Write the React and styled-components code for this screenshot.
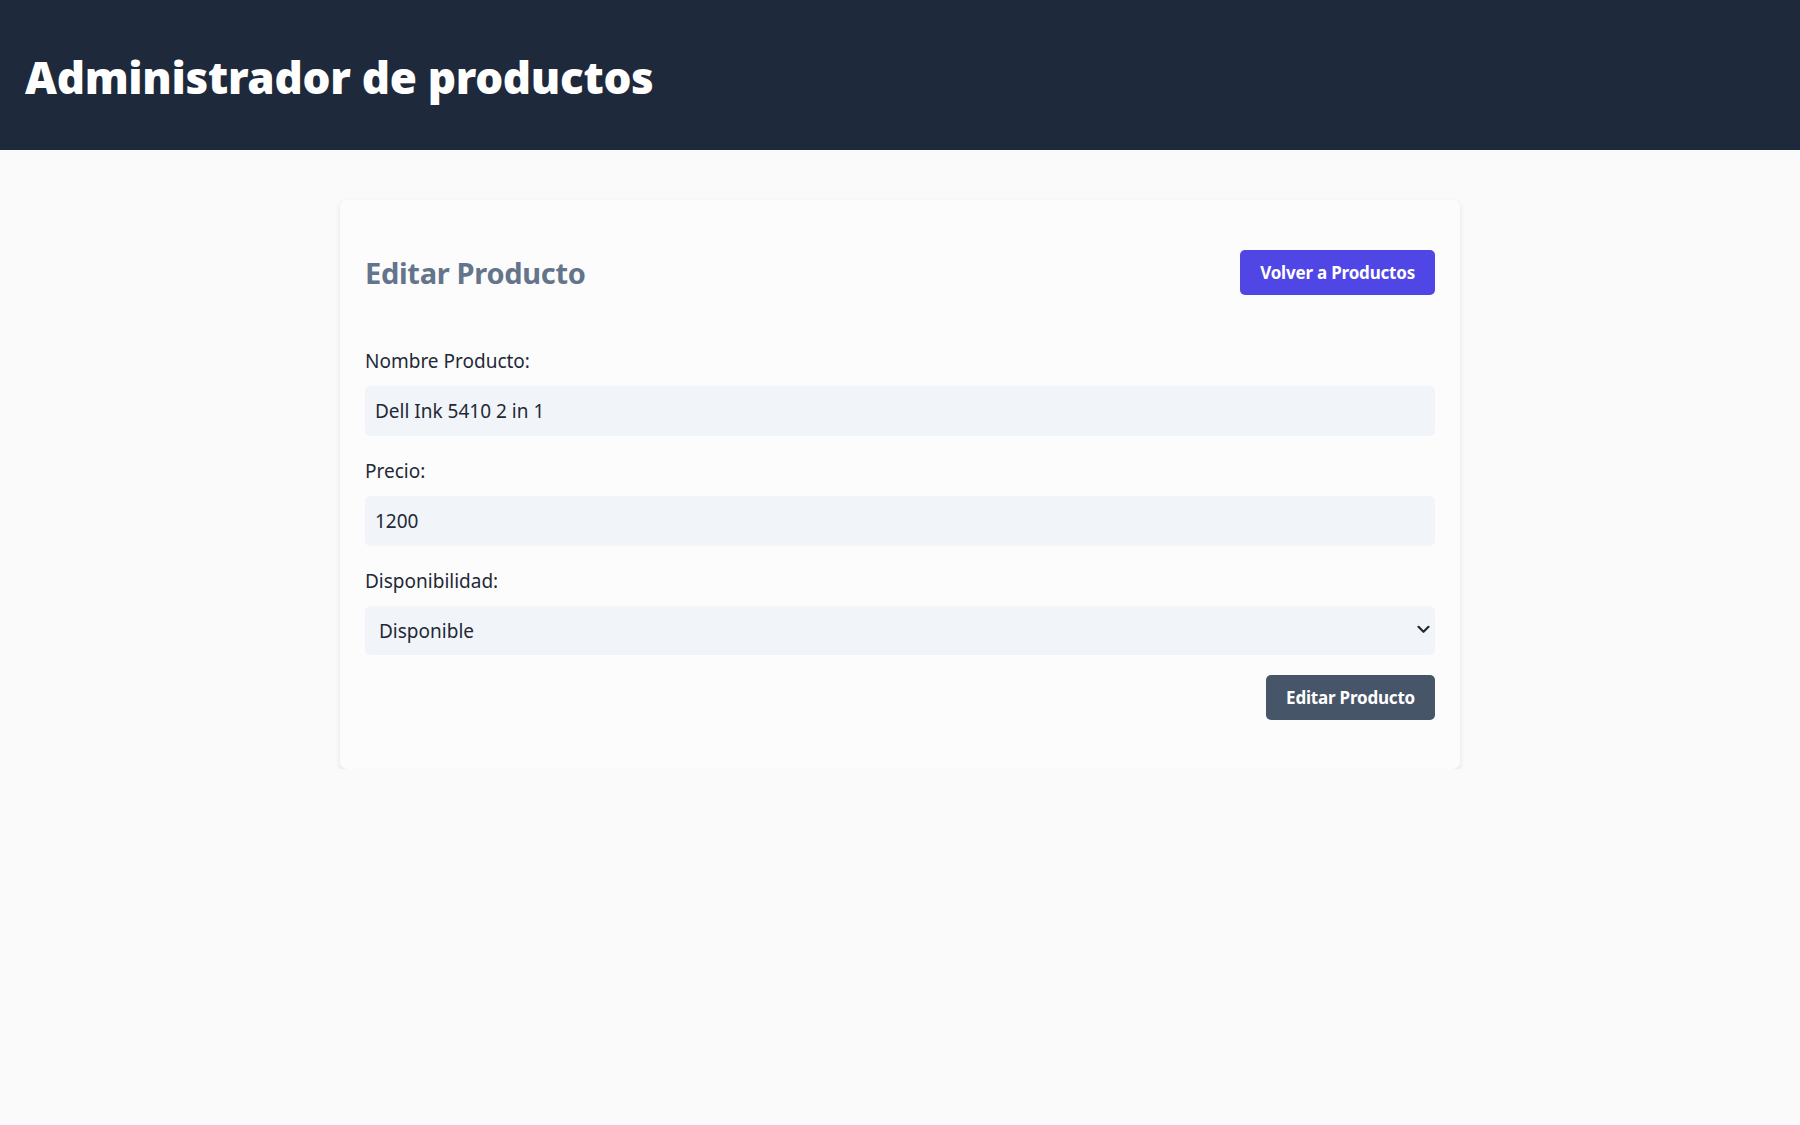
import React from 'react'
import styled, { createGlobalStyle } from 'styled-components'

const GlobalStyle = createGlobalStyle`
  * { box-sizing: border-box; }
  body {
    margin: 0;
    background: #fafafa;
    font-family: "Noto Sans", "Open Sans", sans-serif;
    color: #1e293b;
  }
`

const Header = styled.header`
  background: #1e293b;
  padding: 52px 25px 48px;
`

const Title = styled.h1`
  margin: 0;
  font-size: 44px;
  line-height: 50px;
  font-weight: 900;
  color: #ffffff;
  letter-spacing: -0.3px;
`

const Main = styled.main`
  margin: 50px auto 0;
  max-width: 1120px;
`

const Card = styled.div`
  background: #fcfcfc;
  border-radius: 7px;
  box-shadow: 0 2px 6px rgba(0, 0, 0, 0.08), 0 1px 2px rgba(0, 0, 0, 0.04);
  padding: 50px 25px 49px;
`

const TopRow = styled.div`
  display: flex;
  justify-content: space-between;
  align-items: center;
`

const Heading = styled.h2`
  margin: 0;
  font-size: 29px;
  line-height: 40px;
  font-weight: 700;
  color: #64748b;
  letter-spacing: -0.3px;
`

const Button = styled.button`
  background: ${p => p.$variant === 'dark' ? '#475569' : '#4f46e5'};
  color: #fff;
  border: none;
  border-radius: 5px;
  padding: 10px 20px;
  font-family: inherit;
  font-size: 17px;
  line-height: 25px;
  font-weight: 700;
  letter-spacing: -0.2px;
  cursor: pointer;
`

const Form = styled.form`
  margin-top: 51px;
  display: flex;
  flex-direction: column;
  gap: 20px;
`

const Field = styled.div`
  display: flex;
  flex-direction: column;
  gap: 10px;
`

const Label = styled.label`
  font-size: 19px;
  line-height: 30px;
  color: #1f2937;
`

const Input = styled.input`
  width: 100%;
  border: none;
  outline: none;
  background: #f1f5f9;
  border-radius: 5px;
  padding: 10px;
  font-family: inherit;
  font-size: 19px;
  line-height: 30px;
  color: #1f2937;
`

const SelectWrap = styled.div`
  position: relative;
`

const Select = styled.select`
  width: 100%;
  appearance: none;
  border: none;
  outline: none;
  background: #f1f5f9;
  border-radius: 5px;
  padding: 10px 14px;
  height: 49px;
  font-family: inherit;
  font-size: 19px;
  line-height: 30px;
  color: #1f2937;
`

const Chevron = styled.svg`
  position: absolute;
  right: 5px;
  top: 19px;
  pointer-events: none;
`

const Actions = styled.div`
  display: flex;
  justify-content: flex-end;
`

export default function App() {
  return (
    <>
      <GlobalStyle />
      <Header>
        <Title>Administrador de productos</Title>
      </Header>
      <Main>
        <Card>
          <TopRow>
            <Heading>Editar Producto</Heading>
            <Button type="button">Volver a Productos</Button>
          </TopRow>
          <Form onSubmit={e => e.preventDefault()}>
            <Field>
              <Label htmlFor="name">Nombre Producto:</Label>
              <Input id="name" defaultValue="Dell Ink 5410 2 in 1" />
            </Field>
            <Field>
              <Label htmlFor="price">Precio:</Label>
              <Input id="price" defaultValue="1200" />
            </Field>
            <Field>
              <Label htmlFor="availability">Disponibilidad:</Label>
              <SelectWrap>
                <Select id="availability" defaultValue="true">
                  <option value="true">Disponible</option>
                  <option value="false">No Disponible</option>
                </Select>
                <Chevron width="13" height="9" viewBox="0 0 13 9" fill="none">
                  <path d="M1.5 1.8 L6.5 6.8 L11.5 1.8" stroke="#1f2937" strokeWidth="2.2" strokeLinecap="round" strokeLinejoin="round" />
                </Chevron>
              </SelectWrap>
            </Field>
            <Actions>
              <Button type="submit" $variant="dark">Editar Producto</Button>
            </Actions>
          </Form>
        </Card>
      </Main>
    </>
  )
}
